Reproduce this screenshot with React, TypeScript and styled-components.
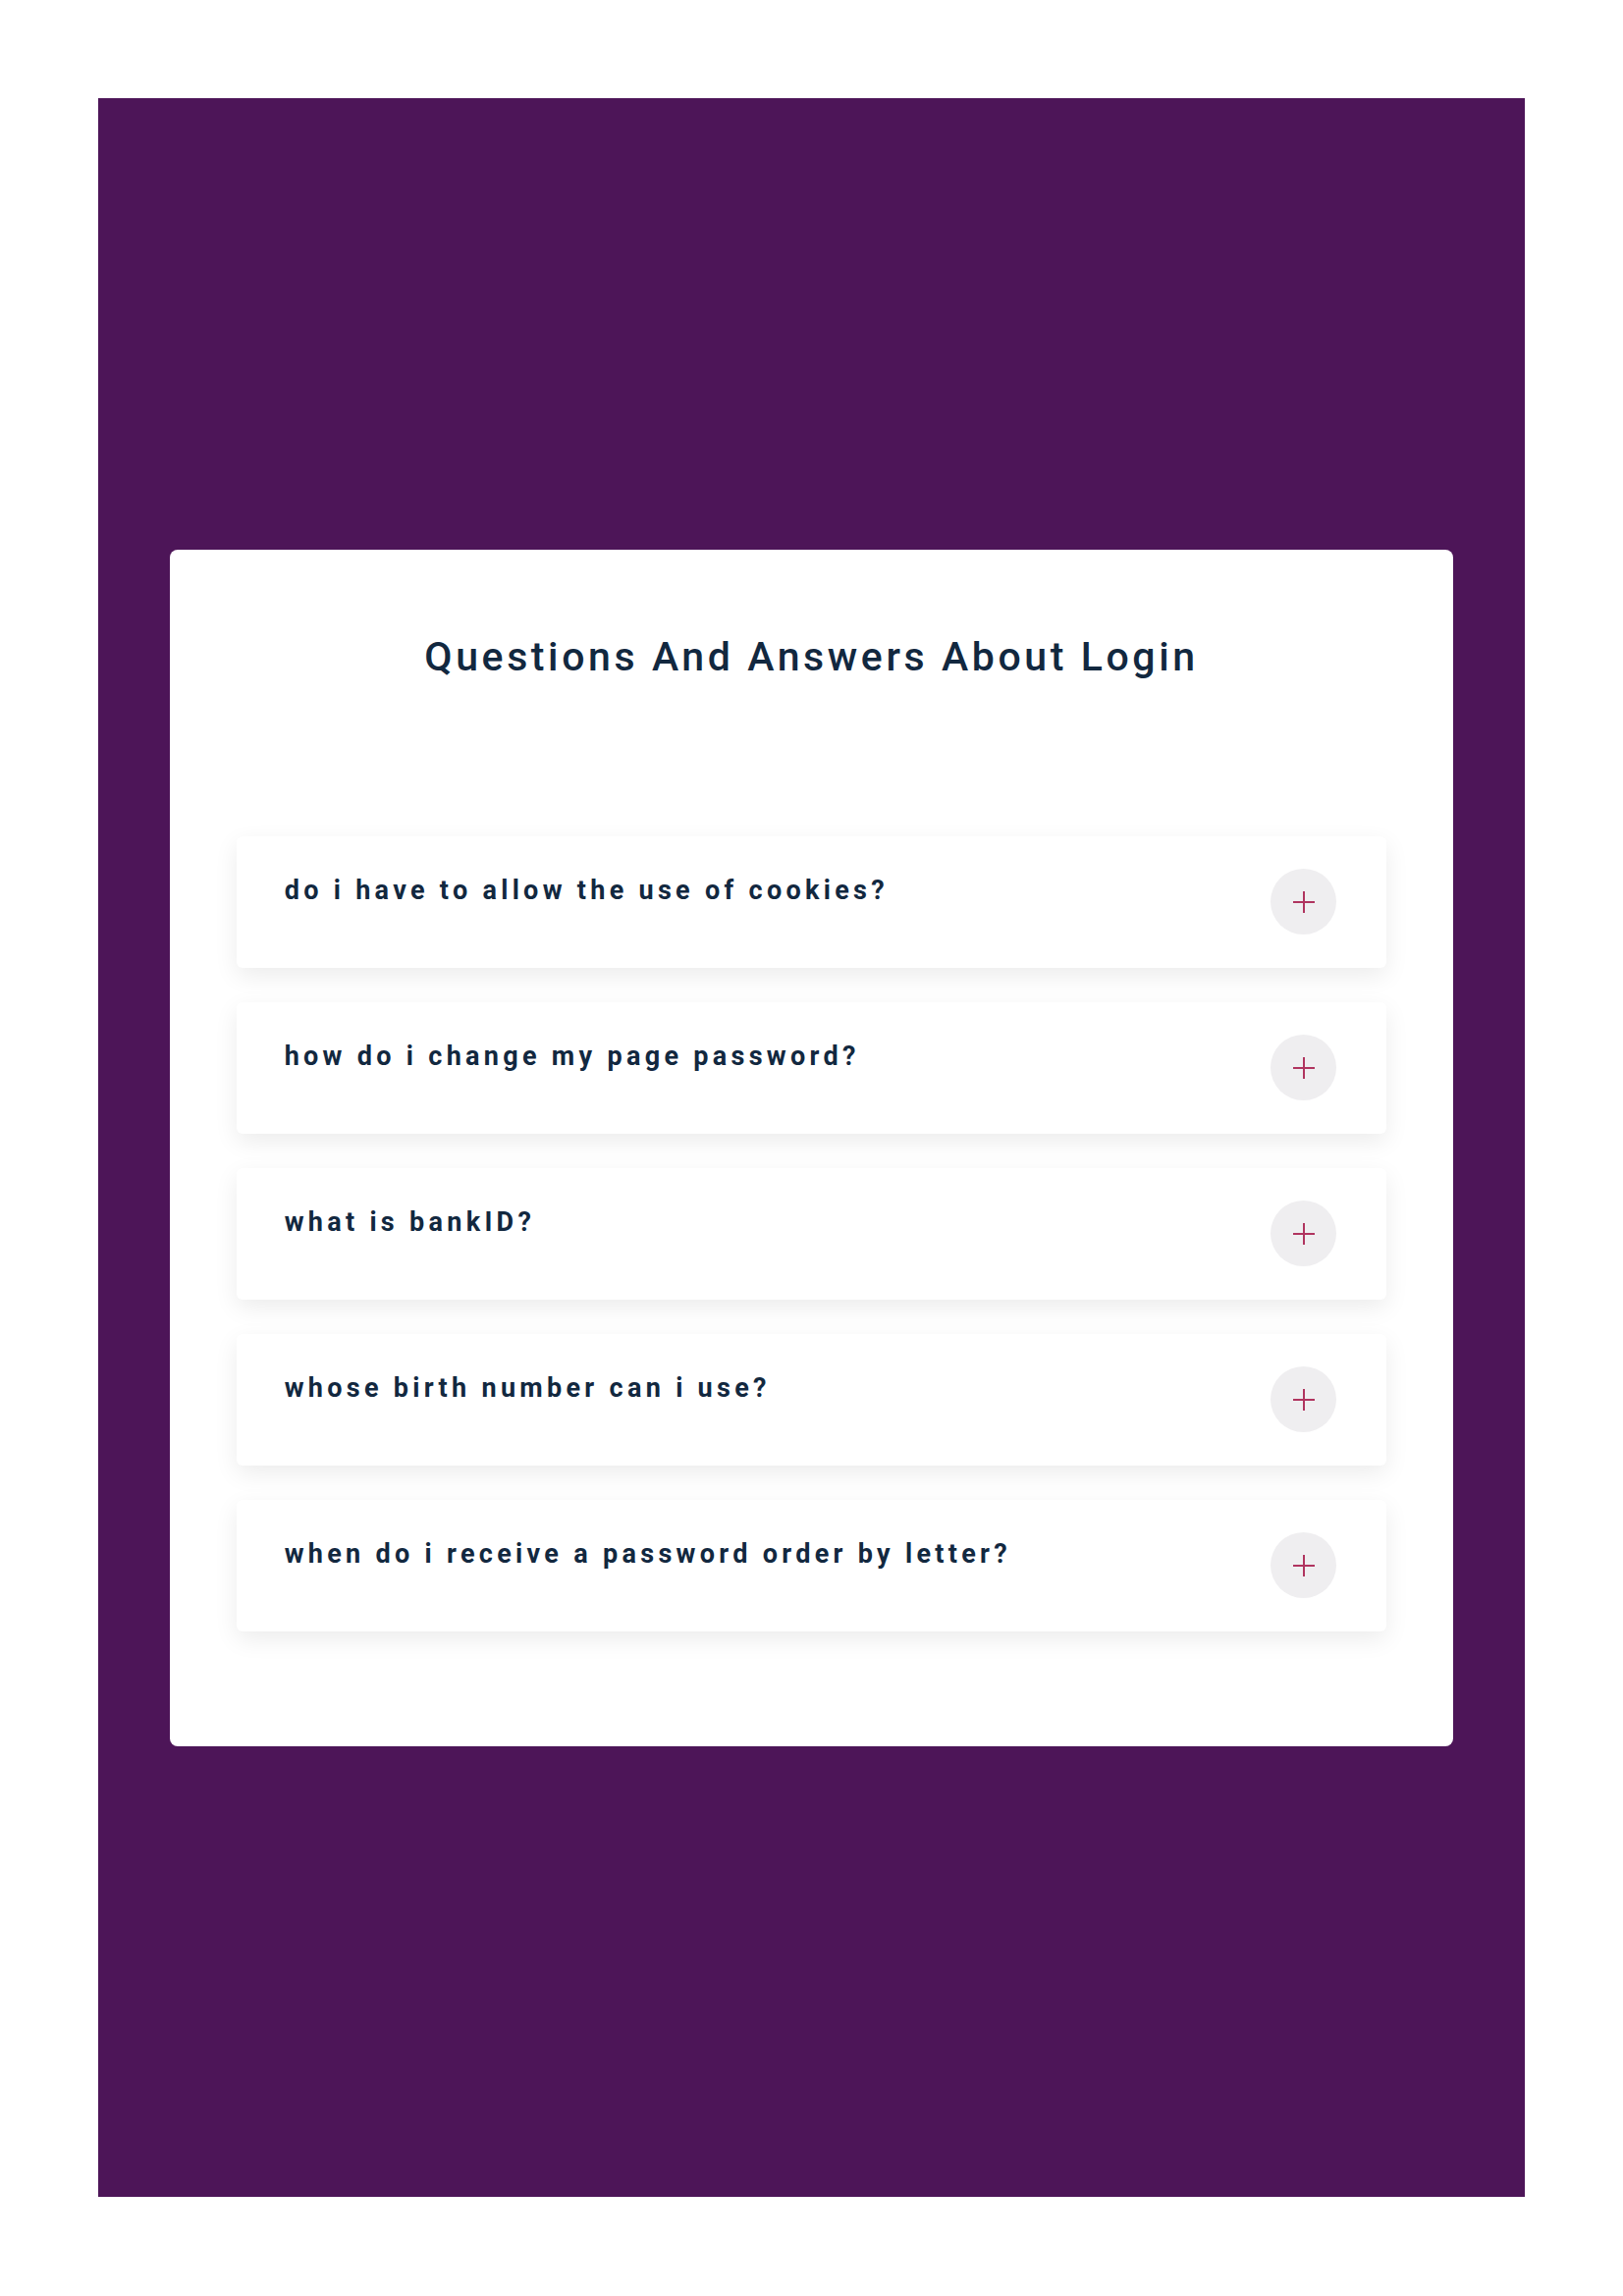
import React from 'react';
import styled, { createGlobalStyle } from 'styled-components';

const GlobalStyle = createGlobalStyle`
  html, body {
    margin: 0;
    padding: 0;
    background: #ffffff;
  }
  body {
    font-family: Roboto, "Liberation Sans", Arial, sans-serif;
  }
`;

const Page = styled.div`
  padding: 100px;
`;

const Backdrop = styled.section`
  height: 2138px;
  background-color: #4d1558;
  display: flex;
  align-items: center;
  justify-content: center;
`;

const Card = styled.div`
  width: 90%;
  box-sizing: border-box;
  background-color: #ffffff;
  border-radius: 8px;
  padding: 86px 68px 117px;
  display: flex;
  flex-direction: column;
`;

const Title = styled.h1`
  margin: 0 0 159px;
  text-align: center;
  font-size: 41px;
  font-weight: 500;
  letter-spacing: 3.6px;
  line-height: 47px;
  color: #12283f;
`;

const List = styled.div`
  display: flex;
  flex-direction: column;
  gap: 35px;
`;

const Item = styled.div`
  height: 134px;
  box-sizing: border-box;
  padding: 0 51px 0 49px;
  background-color: #ffffff;
  border-radius: 6px;
  box-shadow: 0 8px 24px rgba(0, 0, 0, 0.08);
  display: flex;
  align-items: center;
  justify-content: space-between;
`;

const Question = styled.h3`
  align-self: flex-start;
  margin: 39px 0 0;
  font-size: 27px;
  font-weight: 700;
  letter-spacing: 4.3px;
  line-height: 32px;
  color: #12283f;
`;

const Toggle = styled.button`
  width: 67px;
  height: 67px;
  flex-shrink: 0;
  border: none;
  border-radius: 50%;
  background-color: #efeef0;
  color: #b0345f;
  display: flex;
  align-items: center;
  justify-content: center;
  padding: 0;
  cursor: pointer;
`;

const PlusIcon = () => (
  <svg width="22" height="22" viewBox="0 0 22 22" fill="none">
    <path d="M11 0v22M0 11h22" stroke="currentColor" strokeWidth="2" />
  </svg>
);

const questions = [
  'do i have to allow the use of cookies?',
  'how do i change my page password?',
  'what is bankID?',
  'whose birth number can i use?',
  'when do i receive a password order by letter?',
];

const App: React.FC = () => {
  return (
    <>
      <GlobalStyle />
      <Page>
        <Backdrop>
          <Card>
            <Title>Questions And Answers About Login</Title>
            <List>
              {questions.map(q => (
                <Item key={q}>
                  <Question>{q}</Question>
                  <Toggle aria-label="expand">
                    <PlusIcon />
                  </Toggle>
                </Item>
              ))}
            </List>
          </Card>
        </Backdrop>
      </Page>
    </>
  );
};

export default App;
